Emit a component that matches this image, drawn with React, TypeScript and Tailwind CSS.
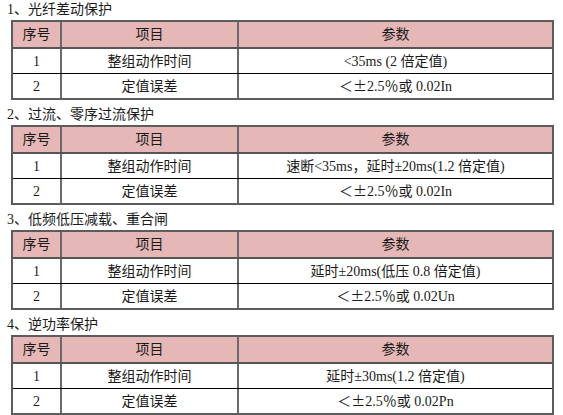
import React from "react";

type Sec = { title: string; r1: string; unit: string };

const sections: Sec[] = [
  { title: "1、光纤差动保护", r1: "<35ms (2 倍定值)", unit: "In" },
  { title: "2、过流、零序过流保护", r1: "速断<35ms，延时±20ms(1.2 倍定值)", unit: "In" },
  { title: "3、低频低压减载、重合闸", r1: "延时±20ms(低压 0.8 倍定值)", unit: "Un" },
  { title: "4、逆功率保护", r1: "延时±30ms(1.2 倍定值)", unit: "Pn" },
];

const cjk = { fontFamily: '"Noto Sans CJK SC", sans-serif' };

function Err({ unit }: { unit: string }) {
  return (
    <span>
      ＜<span style={cjk}>±</span>2.5<span style={cjk}>％</span>或 0.02{unit}
    </span>
  );
}

function Section({ s }: { s: Sec }) {
  return (
    <div className="flex flex-col">
      <div className="h-[20px] leading-[19px] pl-[7px] text-[14px] text-[#1a1a1a]">{s.title}</div>
      <div className="ml-[11px] w-[543px] mb-[5px] border-2 border-[#5c5c5c] text-[14px] text-[#1a1a1a]">
        <div className="grid grid-cols-[49px_177px_1fr] h-[27px] bg-[#e5b8b7] border-b-2 border-[#555]">
          <div className="flex items-center justify-center border-r-2 border-[#6a6a6a]">序号</div>
          <div className="flex items-center justify-center border-r-2 border-[#6a6a6a]">项目</div>
          <div className="flex items-center justify-center">参数</div>
        </div>
        <div className="grid grid-cols-[49px_177px_1fr] h-[25px] border-b-[1.5px] border-black">
          <div className="flex items-center justify-center border-r-2 border-[#6a6a6a]">1</div>
          <div className="flex items-center justify-center border-r-2 border-[#6a6a6a]">整组动作时间</div>
          <div className="flex items-center justify-center">{s.r1}</div>
        </div>
        <div className="grid grid-cols-[49px_177px_1fr] h-[24px]">
          <div className="flex items-center justify-center border-r-2 border-[#6a6a6a]">2</div>
          <div className="flex items-center justify-center border-r-2 border-[#6a6a6a]">定值误差</div>
          <div className="flex items-center justify-center">
            <Err unit={s.unit} />
          </div>
        </div>
      </div>
    </div>
  );
}

export default function App() {
  return (
    <div
      className="w-[563px] h-[415px] bg-white overflow-hidden"
      style={{ fontFamily: '"Liberation Serif", "Noto Sans CJK SC", serif' }}
    >
      {sections.map((s) => (
        <Section key={s.title} s={s} />
      ))}
    </div>
  );
}
